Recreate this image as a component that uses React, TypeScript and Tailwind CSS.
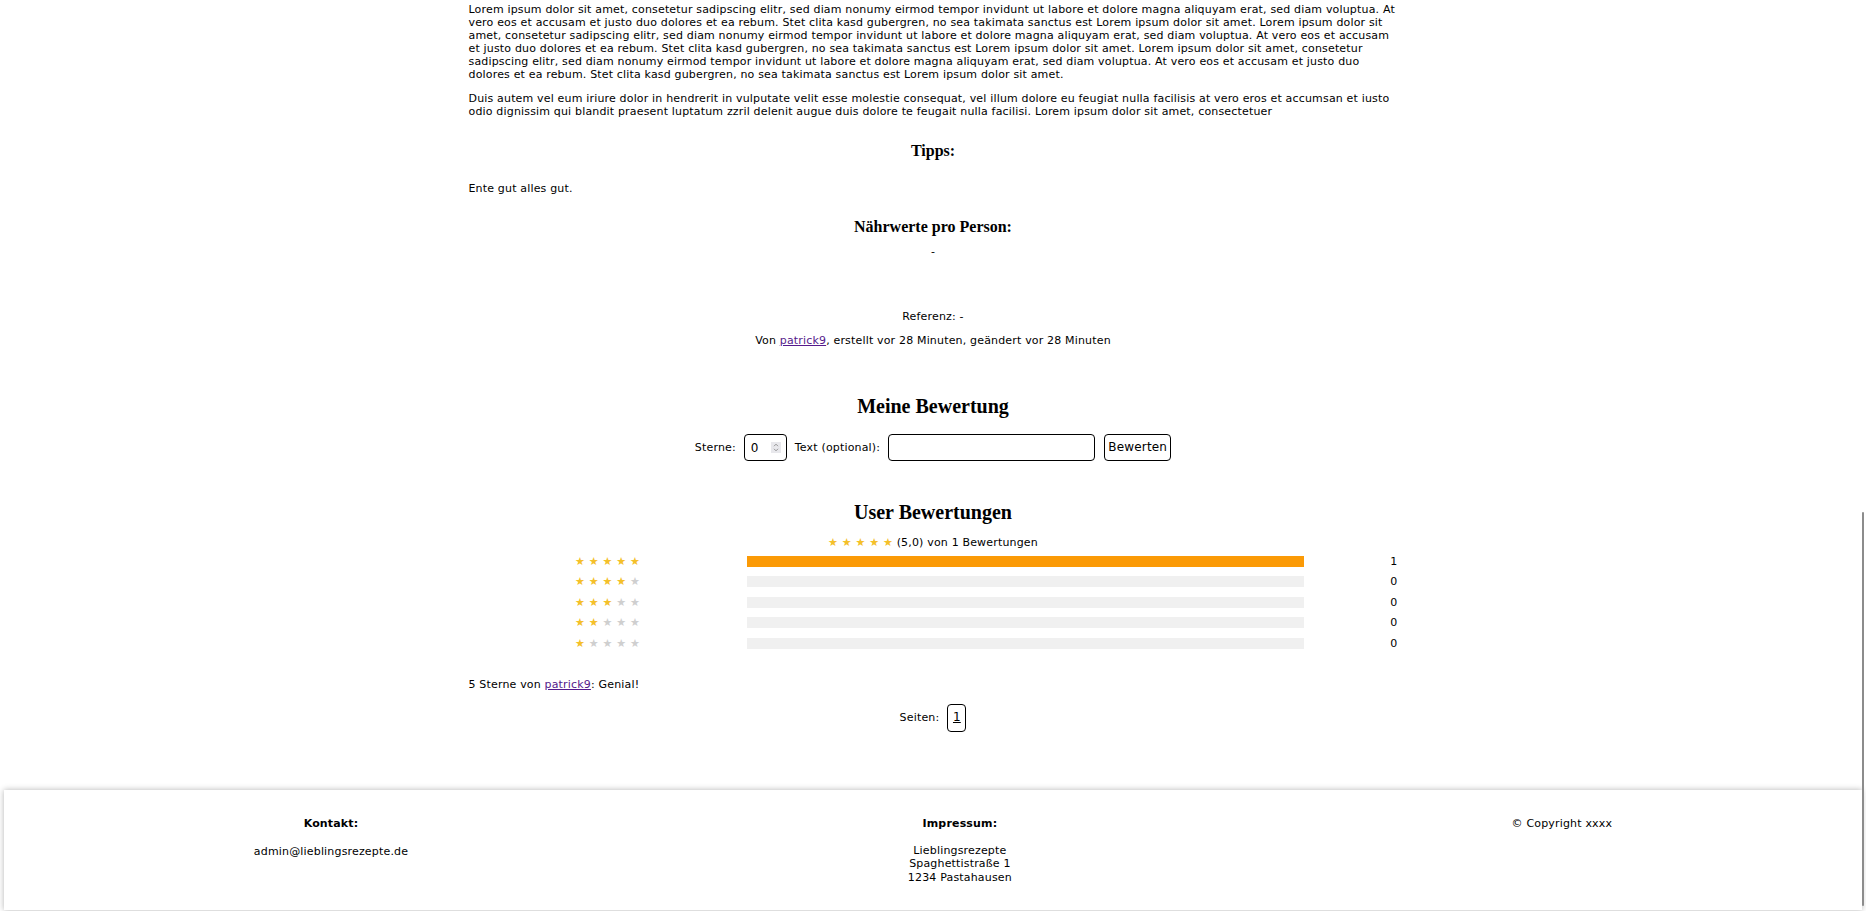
import React from "react";

const lorem1 =
  "Lorem ipsum dolor sit amet, consetetur sadipscing elitr, sed diam nonumy eirmod tempor invidunt ut labore et dolore magna aliquyam erat, sed diam voluptua. At vero eos et accusam et justo duo dolores et ea rebum. Stet clita kasd gubergren, no sea takimata sanctus est Lorem ipsum dolor sit amet. Lorem ipsum dolor sit amet, consetetur sadipscing elitr, sed diam nonumy eirmod tempor invidunt ut labore et dolore magna aliquyam erat, sed diam voluptua. At vero eos et accusam et justo duo dolores et ea rebum. Stet clita kasd gubergren, no sea takimata sanctus est Lorem ipsum dolor sit amet. Lorem ipsum dolor sit amet, consetetur sadipscing elitr, sed diam nonumy eirmod tempor invidunt ut labore et dolore magna aliquyam erat, sed diam voluptua. At vero eos et accusam et justo duo dolores et ea rebum. Stet clita kasd gubergren, no sea takimata sanctus est Lorem ipsum dolor sit amet.";

const lorem2 =
  "Duis autem vel eum iriure dolor in hendrerit in vulputate velit esse molestie consequat, vel illum dolore eu feugiat nulla facilisis at vero eros et accumsan et iusto odio dignissim qui blandit praesent luptatum zzril delenit augue duis dolore te feugait nulla facilisi. Lorem ipsum dolor sit amet, consectetuer";

const ratings = [
  { stars: 5, count: 1 },
  { stars: 4, count: 0 },
  { stars: 3, count: 0 },
  { stars: 2, count: 0 },
  { stars: 1, count: 0 },
];
const total = 1;

const Stars = ({ value }: { value: number }) => (
  <span className="whitespace-pre">
    {[1, 2, 3, 4, 5].map((i) => (
      <span key={i}>
        <span className={i <= value ? "text-[#f4c02a]" : "text-[#cfcfcf]"}>★</span>
        {i < 5 ? " " : ""}
      </span>
    ))}
  </span>
);

const Link = ({ children }: { children: React.ReactNode }) => (
  <a href="#" className="text-[#551a8b] underline">
    {children}
  </a>
);

const App = () => {
  return (
    <div className="min-h-screen bg-white font-['DejaVu_Sans',Verdana,sans-serif] text-[11px] leading-[13px] tracking-[0.17px] text-black">
      <main className="mx-auto flex w-1/2 flex-col px-[2px] pt-[3px]">
        <p>{lorem1}</p>
        <p className="mt-[11px]">{lorem2}</p>

        <h3 className="mt-[24px] text-center font-['Liberation_Serif',serif] text-[16px] leading-[17px] font-bold tracking-normal">
          Tipps:
        </h3>
        <p className="mt-[23px]">Ente gut alles gut.</p>

        <h3 className="mt-[23px] text-center font-['Liberation_Serif',serif] text-[16px] leading-[17px] font-bold tracking-normal">
          Nährwerte pro Person:
        </h3>
        <p className="mt-[10px] text-center">-</p>

        <p className="mt-[52px] text-center">Referenz: -</p>
        <p className="mt-[11px] text-center">
          Von <Link>patrick9</Link>, erstellt vor 28 Minuten, geändert vor 28 Minuten
        </p>

        <h2 className="mt-[48px] text-center font-['Liberation_Serif',serif] text-[20px] leading-[23px] font-bold tracking-normal">
          Meine Bewertung
        </h2>
        <form
          className="mt-[16px] flex items-center justify-center gap-2"
          onSubmit={(e) => e.preventDefault()}
        >
          <label htmlFor="sterne">Sterne:</label>
          <div className="relative">
            <input
              id="sterne"
              type="number"
              min={0}
              max={5}
              defaultValue={0}
              className="h-[27px] w-[43px] appearance-none rounded-[4px] border border-black bg-white pl-[6px] pr-[2px] text-[12px] [&::-webkit-inner-spin-button]:appearance-none [&::-webkit-outer-spin-button]:appearance-none"
            />
            {/* spinner drawn over the field */}
            <span className="pointer-events-none absolute top-[8px] right-[6px] flex h-[11px] w-[10px] flex-col items-center justify-center bg-[#e8e8ec]">
              <svg width="6" height="9" viewBox="0 0 6 9" fill="none" stroke="#8a8a8a" strokeWidth="0.9">
                <path d="M1 3.2 L3 1.2 L5 3.2" />
                <path d="M1 5.8 L3 7.8 L5 5.8" />
              </svg>
            </span>
          </div>
          <label htmlFor="text">Text (optional):</label>
          <input
            id="text"
            type="text"
            className="h-[27px] w-[207px] rounded-[4px] border border-black bg-white px-1 text-[12px]"
          />
          <button
            type="submit"
            className="ml-[1px] h-[27px] w-[67px] rounded-[4px] border border-black bg-white text-[12px]"
          >
            Bewerten
          </button>
        </form>

        <h2 className="mt-[40px] text-center font-['Liberation_Serif',serif] text-[20px] leading-[23px] font-bold tracking-normal">
          User Bewertungen
        </h2>
        <p className="mt-[12px] text-center">
          <Stars value={5} /> (5,0) von 1 Bewertungen
        </p>

        <div className="mt-[2px] flex flex-col">
          {ratings.map((r) => (
            <div key={r.stars} className="flex h-[20.5px] items-center">
              <div className="w-[278px] text-center">
                <Stars value={r.stars} />
              </div>
              <div className="h-[11px] w-[557px] bg-[#f0f0f0]">
                <div
                  className="h-full bg-[#fb9a06]"
                  style={{ width: `${(r.count / total) * 100}%` }}
                />
              </div>
              <div className="flex-1 text-right">{r.count}</div>
            </div>
          ))}
        </div>

        <p className="mt-[24px]">
          5 Sterne von <Link>patrick9</Link>: Genial!
        </p>

        <div className="mt-[13px] flex items-center justify-center gap-2">
          <span>Seiten:</span>
          <button className="h-[28px] w-[19px] rounded-[4px] border border-black bg-white text-[12px] underline">
            1
          </button>
        </div>
      </main>

      <footer className="mx-1 mt-[58px] mb-[2px] flex h-[120px] items-start justify-around bg-white pt-[27px] shadow-[0_0_6px_rgba(0,0,0,0.3)]">
        <div className="text-center">
          <h4 className="font-bold">Kontakt:</h4>
          <p className="mt-[15px]">admin@lieblingsrezepte.de</p>
        </div>
        <div className="text-center">
          <h4 className="font-bold">Impressum:</h4>
          <p className="mt-[14px] leading-[13.5px]">
            Lieblingsrezepte
            <br />
            Spaghettistraße 1
            <br />
            1234 Pastahausen
          </p>
        </div>
        <div className="text-center">
          <p>© Copyright xxxx</p>
        </div>
      </footer>

      <div className="pointer-events-none fixed top-[512px] right-[2px] h-[394px] w-[2px] rounded-full bg-[#8c8c8c]" />
    </div>
  );
};

export default App;
